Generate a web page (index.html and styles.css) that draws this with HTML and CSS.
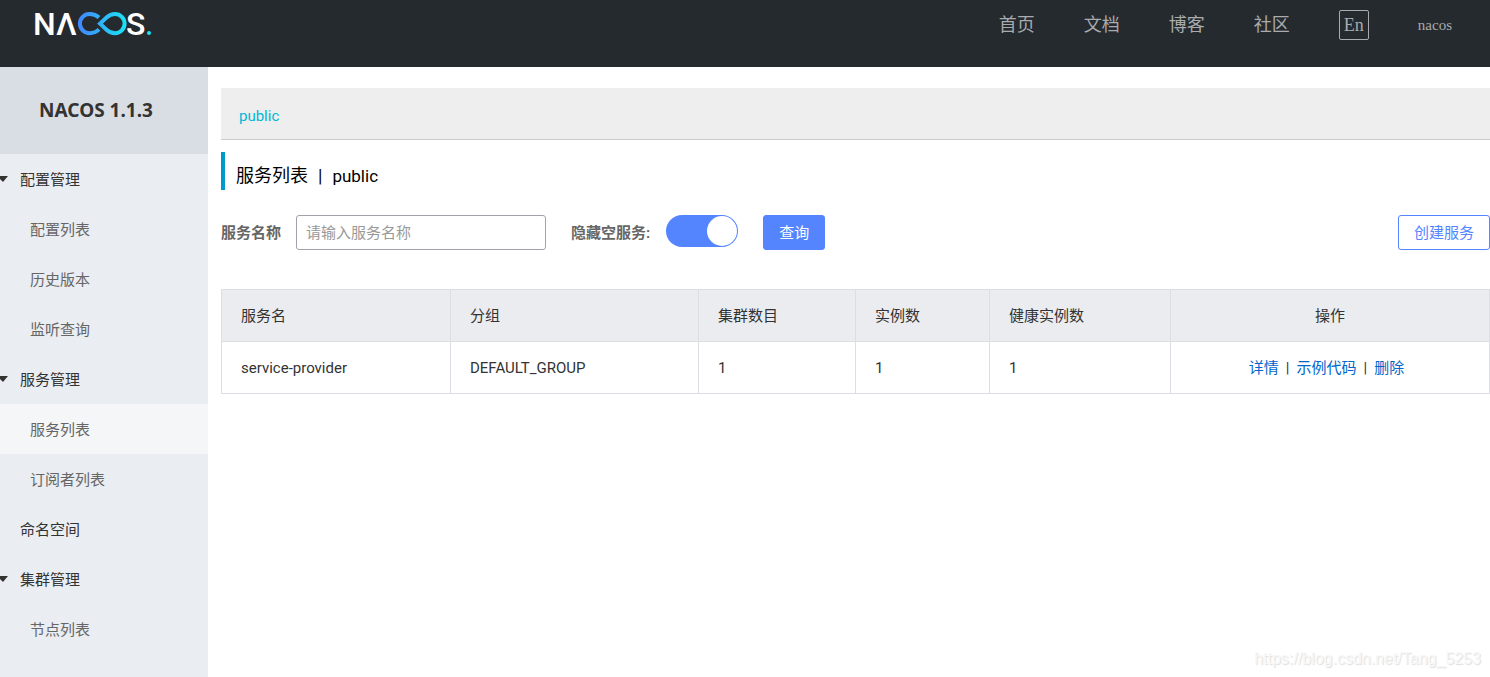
FILE: index.html
```html
<!DOCTYPE html>
<html lang="zh-CN">
<head>
<meta charset="utf-8">
<meta name="viewport" content="width=device-width, initial-scale=1">
<title>Nacos</title>
<link rel="stylesheet" href="styles.css">
</head>
<body>
<header class="header">
  <a class="logo" href="#" aria-label="Nacos">
    <svg width="120" height="48" viewBox="0 0 120 48">
      <defs>
        <linearGradient id="loop" gradientUnits="userSpaceOnUse" x1="44" y1="0" x2="92" y2="0">
          <stop offset="0" stop-color="#4287ff"/>
          <stop offset="1" stop-color="#1ae3f5"/>
        </linearGradient>
      </defs>
      <text class="logo-text" x="-1" y="35">N</text>
      <text class="logo-text" x="22" y="35">Λ</text>
      <g fill="none" stroke="url(#loop)" stroke-width="4" transform="translate(0 10)">
        <path d="M65 7.500C62 4.800 59 4 55.500 4a9.600 9.600 0 0 0 0 19.200c3.500 0 6.500-1 9.500-3.800"/>
        <path d="M66 13.600L72.500 7.500C75.500 4.800 78 4 81 4a9.600 9.600 0 0 1 0 19.200c-3 0-5.500-.8-8.500-3.500Z"/>
      </g>
      <text class="logo-text" x="92" y="35">S</text>
      <circle cx="115" cy="33" r="2" fill="#1ae3f5"/>
    </svg>
  </a>
  <nav class="nav">
    <a href="#">首页</a>
    <a href="#">文档</a>
    <a href="#">博客</a>
    <a href="#">社区</a>
    <button class="lang" type="button">En</button>
    <a class="user" href="#">nacos</a>
  </nav>
</header>
<div class="layout">
  <aside class="sidebar">
    <h1 class="sidebar-title">NACOS 1.1.3</h1>
    <nav class="menu">
      <a class="group" href="#"><svg class="caret" viewBox="0 0 8 6"><path d="M0 0h8L3 6 0 3Z"/></svg>配置管理</a>
      <a class="item" href="#">配置列表</a>
      <a class="item" href="#">历史版本</a>
      <a class="item" href="#">监听查询</a>
      <a class="group" href="#"><svg class="caret" viewBox="0 0 8 6"><path d="M0 0h8L3 6 0 3Z"/></svg>服务管理</a>
      <a class="item active" href="#">服务列表</a>
      <a class="item" href="#">订阅者列表</a>
      <a class="group" href="#"><span class="caret"></span>命名空间</a>
      <a class="group" href="#"><svg class="caret" viewBox="0 0 8 6"><path d="M0 0h8L3 6 0 3Z"/></svg>集群管理</a>
      <a class="item" href="#">节点列表</a>
    </nav>
  </aside>
  <main class="content">
    <div class="namespaces"><a href="#">public</a></div>
    <h2 class="title"><span>服务列表</span><span>|</span><span class="title-ns">public</span></h2>
    <form class="filters">
      <label class="label" for="name">服务名称</label>
      <input class="field" id="name" type="text" placeholder="请输入服务名称">
      <label class="label" for="hide">隐藏空服务:</label>
      <input class="switch" id="hide" type="checkbox" role="switch" checked>
      <button class="btn primary" type="button">查询</button>
      <button class="btn outline" type="button">创建服务</button>
    </form>
    <table class="table">
      <colgroup><col class="c-name"><col class="c-group"><col class="c-cluster"><col class="c-inst"><col class="c-health"><col></colgroup>
      <thead>
        <tr><th>服务名</th><th>分组</th><th>集群数目</th><th>实例数</th><th>健康实例数</th><th class="ops">操作</th></tr>
      </thead>
      <tbody>
        <tr><td>service-provider</td><td>DEFAULT_GROUP</td><td>1</td><td>1</td><td>1</td>
          <td class="ops"><div class="links"><a href="#">详情</a><span>|</span><a href="#">示例代码</a><span>|</span><a href="#">删除</a></div></td></tr>
      </tbody>
    </table>
  </main>
</div>
<div class="watermark">https://blog.csdn.net/Tang_5253</div>
</body>
</html>
```
FILE: styles.css
```css
* { box-sizing: border-box; }
body {
  margin: 0;
  min-height: 100vh;
  display: flex;
  flex-direction: column;
  position: relative;
  background: #fff;
  color: #333;
  font: 15px/24px Roboto, "Noto Sans CJK SC", sans-serif;
}
a { color: inherit; text-decoration: none; }
button, input { font: inherit; margin: 0; }

.header {
  height: 67px;
  padding: 0 38px 0 34px;
  display: flex;
  justify-content: space-between;
  align-items: flex-start;
  background: #252a2f;
}
.logo svg { display: block; }
.logo-text { font: 500 32px Roboto, sans-serif; fill: #fff; }
.nav {
  display: flex;
  align-items: center;
  gap: 49px;
  padding-top: 10px;
  color: #a9abad;
  font-size: 18px;
  line-height: 28px;
}
.lang {
  width: 30px;
  height: 30px;
  padding: 0;
  border: 1px solid #a9abad;
  border-radius: 2px;
  background: none;
  color: inherit;
  font: 18px/26px "Liberation Serif", serif;
}
.user { font: 15px/24px "Liberation Serif", serif; }

.layout { flex: 1; display: flex; }
.sidebar { width: 208px; flex: none; background: #eaedf2; }
.sidebar-title {
  margin: 0;
  height: 87px;
  padding-right: 16px;
  background: #d9dde4;
  font-family: "Noto Sans", sans-serif;
  font-size: 19px;
  line-height: 87px;
  text-align: center;
}
.menu {
  display: flex;
  flex-direction: column;
  font-family: "Noto Sans", "Noto Sans CJK SC", sans-serif;
  line-height: 50px;
}
.group { display: flex; align-items: center; gap: 12px; }
.caret { width: 8px; height: 6px; fill: #333; }
.item { padding-left: 30px; color: #666; }
.active { background: #f4f6f8; }

.content { flex: 1; min-width: 0; padding: 21px 0 0 13px; }
.namespaces {
  padding: 16px 18px 11px;
  border-bottom: 1px solid #ccc;
  background: #eee;
  color: #00b7d8;
}
.title {
  display: flex;
  gap: 10px;
  margin: 12px 0 25px;
  padding: 10px 0 0 11px;
  border-left: 4px solid #09c;
  color: #000;
  font-size: 18px;
  font-weight: 400;
  line-height: 28px;
}
.title-ns { font-size: 17px; }
.filters { display: flex; align-items: flex-start; margin-bottom: 38px; }
.label { color: #666; font-weight: 700; line-height: 36px; }
.field {
  width: 250px;
  height: 35px;
  margin: 0 25px 0 15px;
  padding: 0 9px;
  border: 1px solid #a0a2ad;
  border-radius: 3px;
  color: #333;
}
.field::placeholder { color: #999; }
.switch {
  appearance: none;
  width: 72px;
  height: 32px;
  margin: 0 25px 0 16px;
  padding: 1px;
  display: flex;
  justify-content: flex-end;
  border-radius: 16px;
  background: #5584ff;
}
.switch::before { content: ""; width: 30px; height: 30px; border-radius: 50%; background: #fff; }
.btn {
  height: 35px;
  padding: 1px 15px 0;
  border: 1px solid #5584ff;
  border-radius: 3px;
  line-height: 32px;
}
.primary { background: #5584ff; color: #fff; }
.outline { margin-left: auto; background: #fff; color: #5584ff; }

.table { width: 100%; border-collapse: collapse; table-layout: fixed; }
.c-name { width: 229px; }
.c-group { width: 248px; }
.c-cluster { width: 157px; }
.c-inst { width: 134px; }
.c-health { width: 181px; }
.table th, .table td {
  height: 52px;
  padding: 0 19px;
  border: 1px solid #dcdee3;
  font-weight: 400;
  text-align: left;
}
.table th { background: #ebecf0; }
.table .ops { text-align: center; }
.links { display: flex; justify-content: center; gap: 7px; padding-right: 7px; }
.links a { color: #06c; }
.watermark {
  position: absolute;
  right: 9px;
  bottom: 6px;
  color: #f8f8f8;
  font: 16px/24px "Liberation Sans", sans-serif;
  text-shadow: 1px 1px 1px #ddd;
}
```
